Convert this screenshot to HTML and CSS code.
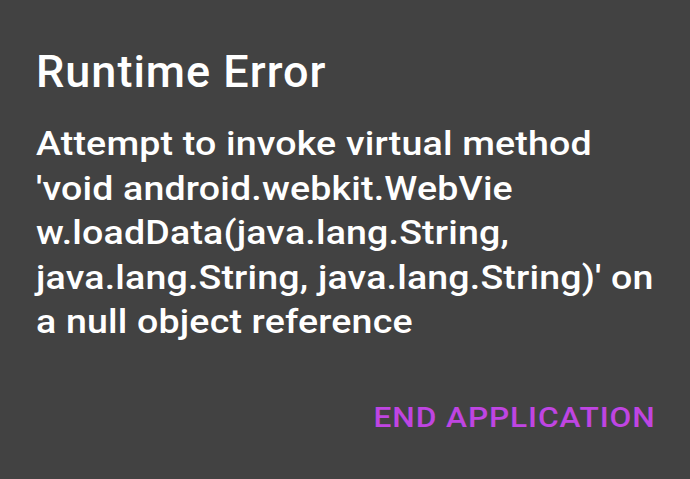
FILE: index.html
```html
<!DOCTYPE html>
<html>
<head>
<meta charset="utf-8">
<link rel="stylesheet" href="styles.css">
</head>
<body>
<div class="dialog">
  <h1 class="title">Runtime Error</h1>
  <p class="message">Attempt to invoke virtual method<br>'void android.webkit.WebVie<br>w.loadData(java.lang.String,<br>java.lang.String, java.lang.String)' on<br>a null object reference</p>
  <div class="actions">
    <span class="button">END APPLICATION</span>
  </div>
</div>
</body>
</html>
```
FILE: styles.css
```css
html, body {
  margin: 0;
  padding: 0;
  background: #424242;
  width: 690px;
  height: 479px;
  overflow: hidden;
}
.dialog {
  font-family: Roboto, "Noto Sans", sans-serif;
  color: #ffffff;
  padding: 45px 30px 0 36px;
}
.title {
  margin: 0;
  font-size: 45px;
  font-weight: 500;
  line-height: 54px;
  letter-spacing: 1px;
}
.message {
  width: max-content;
  margin: 23px 0 0 0;
  font-size: 32.5px;
  font-weight: 500;
  line-height: 44.5px;
  letter-spacing: 0.15px;
  white-space: nowrap;
  transform: scaleX(1.155);
  transform-origin: left top;
}
.actions {
  display: flex;
  justify-content: flex-end;
  padding-right: 4px;
  margin-top: 55px;
}
.button {
  display: inline-block;
  color: #bf45e2;
  font-size: 28px;
  font-weight: 500;
  line-height: 36px;
  letter-spacing: 0.8px;
  transform: scaleX(1.13);
  transform-origin: right top;
}
```
